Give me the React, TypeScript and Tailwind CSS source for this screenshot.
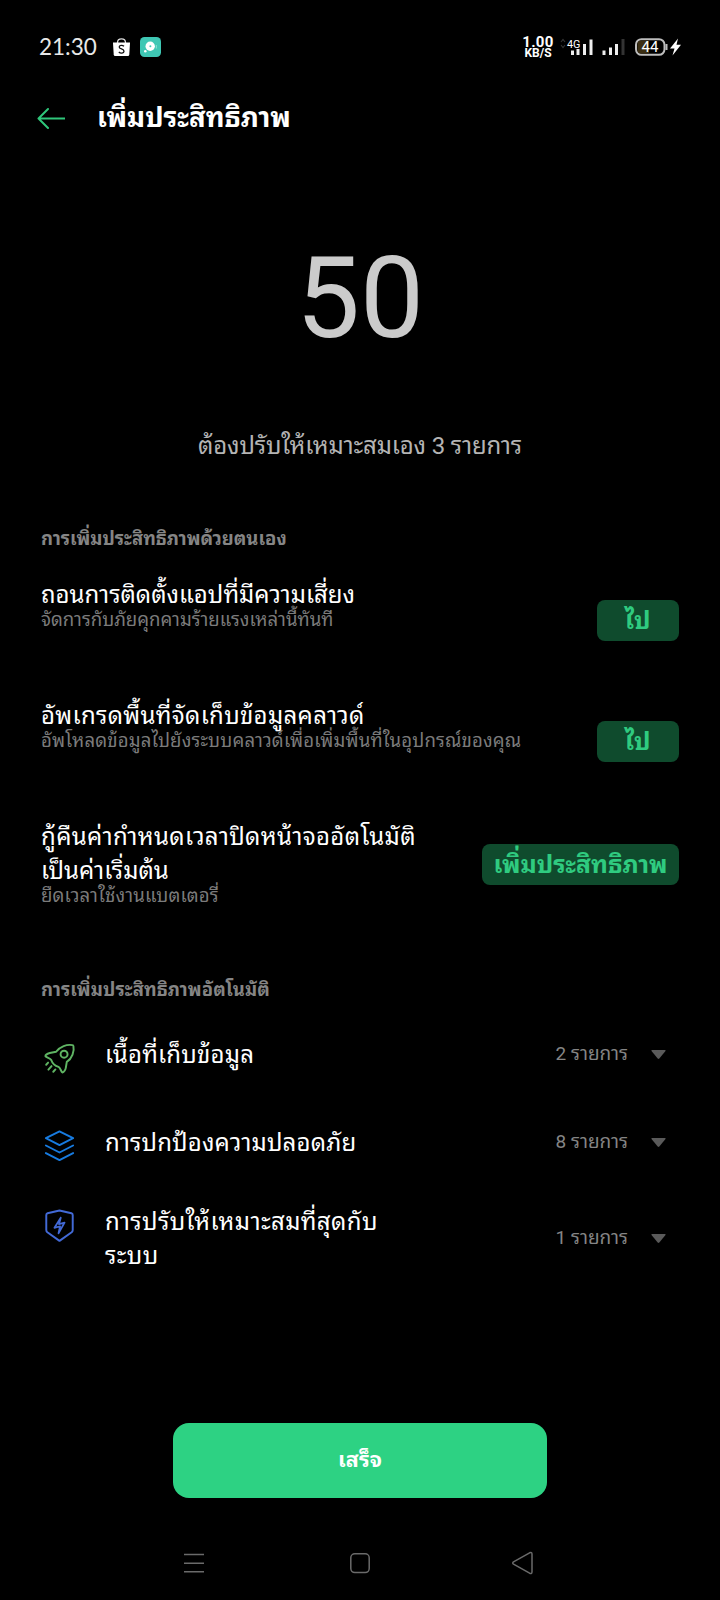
import { clsx } from "clsx";

const manualItems = [
  {
    lines: [{ text: "ถอนการติดตั้งแอปที่มีความเสี่ยง", cls: "" }],
    desc: "จัดการกับภัยคุกคามร้ายแรงเหล่านี้ทันที",
    descCls: "",
    action: "ไป",
    row: "h-[121px]",
    btn: "mt-[22px] w-[82px] tracking-[0.5px]",
  },
  {
    lines: [{ text: "อัพเกรดพื้นที่จัดเก็บข้อมูลคลาวด์", cls: "tracking-[0.32px]" }],
    desc: "อัพโหลดข้อมูลไปยังระบบคลาวด์เพื่อเพิ่มพื้นที่ในอุปกรณ์ของคุณ",
    descCls: "tracking-[0.16px]",
    action: "ไป",
    row: "h-[121px]",
    btn: "mt-[22px] w-[82px] tracking-[0.5px]",
  },
  {
    lines: [
      { text: "กู้คืนค่ากำหนดเวลาปิดหน้าจออัตโนมัติ", cls: "tracking-[0.36px]" },
      { text: "เป็นค่าเริ่มต้น", cls: "" },
    ],
    desc: "ยืดเวลาใช้งานแบตเตอรี่",
    descCls: "tracking-[0.12px]",
    action: "เพิ่มประสิทธิภาพ",
    row: "h-[158px]",
    btn: "mt-6 w-[197px]",
  },
];

const autoItems = [
  {
    icon: RocketIcon,
    lines: ["เนื้อที่เก็บข้อมูล"],
    count: "2 รายการ",
    row: "mt-9",
    iconCls: "mt-1",
    textCls: "tracking-[0.2px]",
  },
  {
    icon: LayersIcon,
    lines: ["การปกป้องความปลอดภัย"],
    count: "8 รายการ",
    row: "mt-[54px]",
    iconCls: "mt-0.5",
    textCls: "tracking-[0.18px]",
  },
  {
    icon: ShieldIcon,
    lines: ["การปรับให้เหมาะสมที่สุดกับ", "ระบบ"],
    count: "1 รายการ",
    row: "mt-[45px]",
    iconCls: "mt-[3px]",
    textCls: "tracking-[0.38px]",
  },
];

function RocketIcon() {
  return (
    <svg width="35" height="35" viewBox="0 0 36 36" fill="none" stroke="#5fb463" strokeWidth="2" strokeLinecap="round" strokeLinejoin="round">
      <path d="M31.500 3.200C25.500 2.200 18.500 4.500 14.500 10L8 11.300C5.500 12 3.500 13.800 3.500 14.600C4 15.800 8.500 16.500 9.500 18.500C10.500 21.500 13.500 24.600 17 25.600C19 26.500 19.500 30.500 21 31.300C22.500 31 24.300 28.500 24.500 26.500L25.500 20.500C31 17 33.500 9.500 32.300 4Q32.200 3.300 31.500 3.200Z" />
      <circle cx="22.700" cy="12.500" r="3.600" />
      <path d="M6.300 21.200L4.300 23.400M9.800 24.800L6.600 28.400M13.800 28.200L11.600 30.600" />
    </svg>
  );
}

function LayersIcon() {
  return (
    <svg width="35" height="35" viewBox="0 0 36 36" fill="none" stroke="#177be0" strokeWidth="2" strokeLinecap="round" strokeLinejoin="round">
      <path d="M18 3.500L32 10.500L18 17.500L4 10.500Z" />
      <path d="M4 18L18 25.200L32 18M4 25.800L18 33L32 25.800" />
    </svg>
  );
}

function ShieldIcon() {
  return (
    <svg width="35" height="35" viewBox="0 0 36 36" fill="none" stroke="#4269d6" strokeWidth="2" strokeLinecap="round" strokeLinejoin="round">
      <path d="M18 2.500L30.300 5.400Q31.600 5.800 31.600 7.200V22.500Q31.600 24 30.500 25L18 33.800L5.500 25Q4.400 24 4.400 22.500V7.200Q4.400 5.800 5.700 5.400Z" />
      <path d="M19.300 10L12.800 20.400L18.600 18.800L17 26M19.300 10L17.500 16.600L23.200 15L17 26" strokeWidth="1.800" />
    </svg>
  );
}

function StatusBar() {
  return (
    <div className="flex h-[94px] items-center pl-[39px] text-[#e8e8e8]">
      <span className="w-[74px] font-[Lato] text-[22.500px] leading-6">21:30</span>
      <svg width="17" height="18" viewBox="0 0 17 18">
        <path d="M4.500 5.500V4.500C4.500 2 6 .8 8.500 .8S12.500 2 12.500 4.500V5.500" fill="none" stroke="#ddd" strokeWidth="1.300" />
        <path d="M0 4.500H17L16.300 16.500Q16.200 18 14.800 18H2.200Q.8 18 .7 16.500Z" fill="#fff" />
        <path d="M11 8.300C9.500 6.900 6.200 7 6.200 9C6.200 11.300 11 10.600 11 13.200C11 15.500 7.400 15.600 5.800 14" fill="none" stroke="#111" strokeWidth="1.300" />
      </svg>
      <svg width="21" height="20" viewBox="0 0 21 20" className="ml-[10px]">
        <rect width="21" height="20" rx="4.500" fill="#3fc7b4" />
        <circle cx="10.200" cy="9.300" r="4.700" fill="#fff" />
        <circle cx="10.400" cy="9.300" r="1" fill="#3fc7b4" />
        <circle cx="5.300" cy="14.200" r="1.300" fill="#fff" />
        <path d="M16.300 8V11.500" stroke="#8de0d4" strokeWidth="1" />
      </svg>
      <div className="ml-[362px] flex w-[30px] flex-col items-center font-[Roboto] font-bold text-white">
        <span className="text-[15px] leading-[12px] tracking-[0.300px]">1.00</span>
        <span className="text-[12px] leading-[11px]">KB/S</span>
      </div>
      <svg width="132" height="24" viewBox="0 0 132 24" className="ml-[6px]" fontFamily="Roboto">
        <path d="M2 7L4 4.500L6 7M2 10L4 12.500L6 10" fill="none" stroke="#333" strokeWidth="1.200" />
        <text x="8" y="12.500" fontSize="10.800" fill="#fff">4G</text>
        <path d="M13.500 15.500V20M19 14V20M25.500 9V20M32 4.500V20" stroke="#eee" strokeWidth="3" />
        <path d="M45 15.500V20M51.500 12.500V20M57.500 9V20" stroke="#eee" strokeWidth="3" />
        <path d="M64 4V20" stroke="#333" strokeWidth="3" />
        <rect x="77" y="4.200" width="28.500" height="15.600" rx="5.500" fill="#000" stroke="#bdbdbd" strokeWidth="2" />
        <path d="M82 5.500H90V18.500H82Q78.500 18.500 78.500 15V9Q78.500 5.500 82 5.500Z" fill="#3b2e12" />
        <path d="M107.500 9V15" stroke="#bdbdbd" strokeWidth="2" />
        <text x="82.500" y="17.200" fontSize="15" fill="#fff">44</text>
        <path d="M119 3.500L111 13.500H115.500L113.500 20.500L122 9.800H117.500Z" fill="#fff" />
      </svg>
    </div>
  );
}

export default function App() {
  return (
    <div className="flex h-[1600px] w-[720px] flex-col overflow-hidden bg-black font-[Roboto,'Noto_Sans_Thai_Looped','Noto_Looped_Thai','Loma','Waree','Noto_Sans_Thai','Noto_Sans',sans-serif] whitespace-nowrap text-white">
      <StatusBar />

      <header className="flex h-12 items-center pl-[37px]">
        <svg width="28" height="22" viewBox="0 0 28 22" fill="none" stroke="#2fc67a" strokeWidth="2" strokeLinecap="round" strokeLinejoin="round" className="translate-y-[0.5px]">
          <path d="M11 1.500L1.500 11L11 20.500M1.500 11H27.500" />
        </svg>
        <h1 className="ml-8 text-[27.5px] leading-8 font-bold">เพิ่มประสิทธิภาพ</h1>
      </header>

      <div className="mt-[99px] text-center text-[114px] leading-[114px] text-[#cbcbcb]">50</div>
      <p className="mt-[75px] text-center text-2xl leading-8 tracking-[-0.15px] text-[#b4b4b4]">ต้องปรับให้เหมาะสมเอง 3 รายการ</p>

      <section className="mt-[65px] pr-[41px] pl-[41px]">
        <h2 className="text-[18.5px] leading-6 font-bold text-[#858585]">การเพิ่มประสิทธิภาพด้วยตนเอง</h2>
        <div className="mt-[27px]">
          {manualItems.map((item) => (
            <div key={item.desc} className={clsx("flex items-start justify-between", item.row)}>
              <div>
                {item.lines.map((line) => (
                  <div key={line.text} className={clsx("text-2xl leading-[34px]", line.cls)}>{line.text}</div>
                ))}
                <p className={clsx("text-[18.6px] leading-4 text-[#7b7b7b]", item.descCls)}>{item.desc}</p>
              </div>
              <button className={clsx("h-[41px] rounded-lg bg-[#0f4b2d] text-[24.7px] leading-9 font-bold text-[#2fcb80]", item.btn)}>
                {item.action}
              </button>
            </div>
          ))}
        </div>
      </section>

      <section className="pr-[54px] pl-[42px]">
        <h2 className="-ml-px text-[18.5px] leading-6 font-bold tracking-[0.08px] text-[#858585]">การเพิ่มประสิทธิภาพอัตโนมัติ</h2>
        {autoItems.map((item) => (
          <div key={item.count} className={clsx("flex items-center", item.row)}>
            <div className={clsx("h-[30px] self-start", item.iconCls)}>
              <item.icon />
            </div>
            <div className="ml-7 flex-1">
              {item.lines.map((line) => (
                <div key={line} className={clsx("text-2xl leading-[34px]", item.textCls)}>{line}</div>
              ))}
            </div>
            <div className="mb-0.5 flex items-center">
              <span className="text-[19px] leading-6 text-[#858585]">{item.count}</span>
              <svg width="15" height="9" viewBox="0 0 15 9" className="ml-[23px]">
                <path d="M1 0H14Q15 0 14.500 1L8.300 8.500Q7.500 9.300 6.700 8.500L.5 1Q0 0 1 0Z" fill="#5a5a5a" />
              </svg>
            </div>
          </div>
        ))}
      </section>

      <button className="mt-[150px] h-[75px] w-[374px] shrink-0 self-center rounded-2xl bg-[#2dd283] pb-px text-[21.5px] leading-6 font-bold">เสร็จ</button>

      <nav className="mt-[53px] flex items-center pl-[184px] text-[#6a6a6a]">
        <svg width="20" height="24" viewBox="0 0 20 24" stroke="currentColor" strokeWidth="1.600">
          <path d="M0 3.500H20M0 12.200H20M0 20.800H20" />
        </svg>
        <svg width="20" height="24" viewBox="0 0 20 24" fill="none" stroke="currentColor" strokeWidth="1.500" className="ml-[146px]">
          <rect x=".8" y="2.800" width="18.400" height="18.800" rx="4" />
        </svg>
        <svg width="21" height="24" viewBox="0 0 21 24" fill="none" stroke="currentColor" strokeWidth="1.500" strokeLinejoin="round" className="ml-[142px]">
          <path d="M1.500 10.900Q0 12 1.500 13.100L17.600 22.200Q20 23.300 20 20.800V3.200Q20 .7 17.600 1.800Z" />
        </svg>
      </nav>
    </div>
  );
}
